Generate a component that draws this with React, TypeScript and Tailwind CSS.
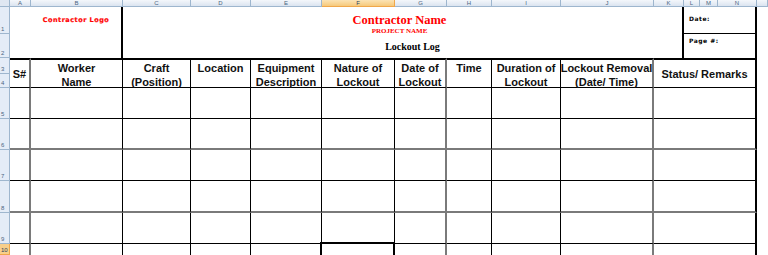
import React from "react";

const letters = ["A", "B", "C", "D", "E", "F", "G", "H", "I", "J", "K", "L", "M", "N", ""];

// column letter cells in the top bar
const letterCls = [
  "col-start-2",
  "col-start-3",
  "col-start-4",
  "col-start-5",
  "col-start-6",
  "col-start-7",
  "col-start-8",
  "col-start-9",
  "col-start-10",
  "col-start-11",
  "col-start-12",
  "col-start-13",
  "col-start-14",
  "col-start-15",
  "col-start-16",
];

const rowHeadCls = [
  "row-start-2",
  "row-start-3",
  "row-start-4",
  "row-start-5",
  "row-start-6",
  "row-start-7",
  "row-start-8",
  "row-start-9",
  "row-start-10",
  "row-start-11",
];

// body columns, Status spans K..N
const colCls = [
  "col-start-2 border-r-2 border-r-[#7a7a7a]",
  "col-start-3 border-r border-r-black",
  "col-start-4 border-r border-r-black",
  "col-start-5 border-r border-r-black",
  "col-start-6 border-r border-r-black",
  "col-start-7 border-r border-r-black",
  "col-start-8 border-r-2 border-r-[#7a7a7a]",
  "col-start-9 border-r border-r-black",
  "col-start-10 border-r border-r-black",
  "col-start-11 border-r-2 border-r-[#7a7a7a]",
  "col-start-12 col-span-4 border-r-2 border-r-black",
];

const rowCls = [
  "row-start-6 border-b border-b-black",
  "row-start-7 border-b-2 border-b-[#7a7a7a]",
  "row-start-8 border-b border-b-black",
  "row-start-9 border-b-2 border-b-[#7a7a7a]",
  "row-start-10 border-b border-b-black",
  "row-start-11",
];

const headers: { lines: string[]; center?: boolean }[] = [
  { lines: ["S#"], center: true },
  { lines: ["Worker", "Name"] },
  { lines: ["Craft", "(Position)"] },
  { lines: ["Location"] },
  { lines: ["Equipment", "Description"] },
  { lines: ["Nature of", "Lockout"] },
  { lines: ["Date of", "Lockout"] },
  { lines: ["Time"] },
  { lines: ["Duration of", "Lockout"] },
  { lines: ["Lockout Removal", "(Date/ Time)"] },
  { lines: ["Status/ Remarks"], center: true },
];

export default function App() {
  return (
    <div className="w-[768px] h-[255px] overflow-hidden bg-white">
      <div className="grid grid-cols-[10px_21px_92px_68px_60px_71px_73px_52px_45px_69px_93px_30px_16px_18px_39px_11px] grid-rows-[7px_27px_24px_16px_14px_31px_31px_31px_32px_31px_11px]">
        {/* corner */}
        <div className="col-start-1 row-start-1 bg-[#dfe7f2] border-r border-b border-[#9eb6ce]" />
        {letters.map((l, i) => (
          <div
            key={"c" + i}
            className={`${letterCls[i]} row-start-1 flex items-center justify-center border-r border-b text-[6px] leading-none font-['Liberation_Sans',sans-serif] ${
              l === "F"
                ? "bg-gradient-to-b from-[#fbe3b4] to-[#f6c97a] border-[#f0a74a] text-[#27415f]"
                : "bg-gradient-to-b from-[#f4f7fb] to-[#dbe4f0] border-[#9eb6ce] text-[#4c6581]"
            }`}
          >
            {l}
          </div>
        ))}
        {/* row numbers */}
        {rowHeadCls.map((r, i) => (
          <div
            key={"r" + i}
            className={`${r} col-start-1 flex items-end pl-[1px] pb-[1px] border-r border-b text-[6px] leading-none font-['Liberation_Sans',sans-serif] ${
              i === 9
                ? "bg-[#f8cf8a] border-[#f0a74a] text-[#27415f]"
                : "bg-[#e4ecf7] border-[#9eb6ce] text-[#4c6581]"
            }`}
          >
            {i + 1}
          </div>
        ))}

        {/* logo */}
        <div className="col-start-3 row-start-2 row-span-2 border-r-2 border-r-black flex justify-center pt-[10px]">
          <span className="text-[6.5px] leading-none font-black tracking-[0.5px] text-[#ff0000] font-['DejaVu_Sans',sans-serif] [-webkit-text-stroke:0.2px_#ff0000]">
            Contractor Logo
          </span>
        </div>

        {/* title block */}
        <div className="col-start-4 col-span-9 row-start-2 row-span-2 border-r-2 border-r-black flex flex-col items-center font-['Liberation_Serif',serif] font-bold">
          <span className="mt-[6px] -ml-[6px] text-[12.5px] leading-[14px] text-[#ff0000]">Contractor Name</span>
          <span className="-ml-[6px] text-[7px] leading-[8px] text-[#ff0000]">PROJECT NAME</span>
          <span className="mt-[6px] ml-[20px] text-[10px] leading-[11px] text-black">Lockout Log</span>
        </div>

        {/* date / page */}
        <div className="col-start-13 col-span-3 row-start-2 border-b border-b-black border-r-2 border-r-black pl-[5px] pt-[9px] text-[6px] leading-none font-bold tracking-[0.5px] font-['DejaVu_Sans',sans-serif]">
          Date:
        </div>
        <div className="col-start-13 col-span-3 row-start-3 border-r-2 border-r-black pl-[5px] pt-[4px] text-[6px] leading-none font-bold tracking-[0.5px] font-['DejaVu_Sans',sans-serif]">
          Page #:
        </div>

        {/* column headers */}
        {headers.map((h, i) => (
          <div
            key={"h" + i}
            className={`${colCls[i]} row-start-4 row-span-2 border-t-2 border-t-black border-b border-b-black flex flex-col items-center ${
              h.center ? "justify-center" : "pt-[1px]"
            } text-[11px] leading-[14px] font-bold text-[#111] font-['Liberation_Sans',sans-serif] whitespace-nowrap`}
          >
            {h.lines.map((t) => (
              <span key={t}>{t}</span>
            ))}
          </div>
        ))}

        {/* data rows */}
        {rowCls.map((r, ri) =>
          colCls.map((c, ci) => (
            <div key={ri + "-" + ci} className={`${c} ${r} relative`}>
              {ri === 5 && ci === 5 && (
                <div className="absolute -left-[2px] -top-[2px] -right-[1px] h-[20px] border-2 border-black">
                  <div className="h-full border border-white" />
                </div>
              )}
            </div>
          ))
        )}
      </div>
    </div>
  );
}
